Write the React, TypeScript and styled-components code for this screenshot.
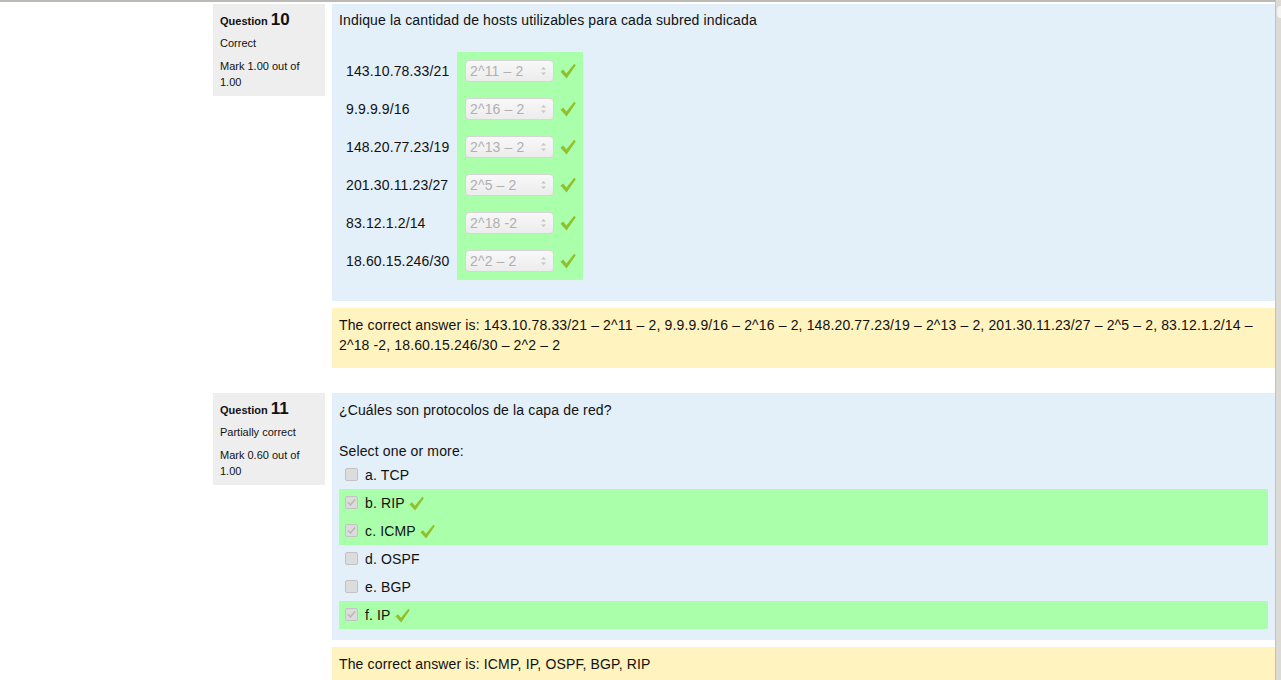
import styled, { createGlobalStyle } from "styled-components";

const GlobalStyle = createGlobalStyle`
  body {
    margin: 0;
    background: #fff;
    font-family: "Liberation Sans", Arial, sans-serif;
    color: #111;
  }
`;

const Frame = styled.div`
  display: flex;
  height: 680px;
  overflow: hidden;
`;

const Page = styled.div`
  flex: 1;
  border-top: 2px solid #bcbab5;
  padding: 2px 0 0 213px;
`;

const Scrollbar = styled.div`
  width: 5px;
  background: #dcdad5;
  border-left: 1px solid #c4c2bd;
  position: relative;
  &::before {
    content: "";
    position: absolute;
    top: 6px;
    left: 1px;
    right: 0;
    height: 12px;
    background: #f4f4f2;
    border-radius: 4px 0 0 4px;
  }
`;

const QuestionRow = styled.div<{ $last?: boolean }>`
  display: flex;
  align-items: flex-start;
  gap: 7px;
  margin-bottom: ${(p) => (p.$last ? "0" : "25px")};
`;

const Info = styled.div`
  width: 112px;
  flex-shrink: 0;
  box-sizing: border-box;
  height: 92px;
  background: #eeeeee;
  padding: 7px 7px 0 7px;
  font-size: 11px;
`;

const QNo = styled.div`
  line-height: 18px;
  font-weight: bold;
  span {
    font-size: 17px;
  }
`;

const State = styled.div`
  margin-top: 5px;
  line-height: 16px;
`;

const Grade = styled.div`
  margin-top: 7px;
  line-height: 16px;
`;

const Content = styled.div`
  flex: 1;
  display: flex;
  flex-direction: column;
  gap: 7px;
  letter-spacing: 0.14px;
`;

const Formulation = styled.div<{ $top: number; $bottom: number }>`
  background: #e3eff9;
  padding: ${(p) => p.$top}px 7px ${(p) => p.$bottom}px 7px;
  font-size: 14px;
  line-height: 20px;
`;

const Outcome = styled.div`
  background: #fff3bf;
  padding: 7px 7px 13px 7px;
  font-size: 14px;
  line-height: 20px;
`;

const QText = styled.div<{ $gap: number }>`
  margin-bottom: ${(p) => p.$gap}px;
`;

const AnswerTable = styled.div`
  display: grid;
  grid-template-columns: 118px 126px;
`;

const Label = styled.div`
  height: 38px;
  display: flex;
  align-items: center;
  padding-left: 7px;
`;

const AnswerCell = styled.div`
  height: 38px;
  background: #aaffaa;
  display: flex;
  align-items: center;
  padding-left: 8px;
  gap: 5px;
`;

const Select = styled.div`
  width: 89px;
  height: 22px;
  box-sizing: border-box;
  border: 1px solid #d6d6d6;
  border-radius: 4px;
  background: linear-gradient(#f8f8f8, #ececec);
  color: #b0b0b0;
  display: flex;
  align-items: center;
  justify-content: space-between;
  padding: 0 6px 0 4px;
  font-size: 14px;
`;

const Spinner = styled.svg`
  width: 7px;
  height: 12px;
`;

const Tick = styled.svg<{ $size: number }>`
  width: ${(p) => p.$size}px;
  height: ${(p) => p.$size}px;
  flex-shrink: 0;
`;

const Prompt = styled.div`
  line-height: 20px;
`;

const Option = styled.div<{ $correct?: boolean }>`
  height: 28px;
  display: flex;
  align-items: center;
  padding-left: 6px;
  background: ${(p) => (p.$correct ? "#aaffaa" : "transparent")};
`;

const Box = styled.span`
  width: 11px;
  height: 11px;
  border: 1px solid #c2c2c2;
  border-radius: 2px;
  background: #dcdcdc;
  margin-right: 7px;
  position: relative;
  top: -1px;
  display: flex;
  align-items: center;
  justify-content: center;
`;

const OptionText = styled.span`
  display: flex;
  align-items: center;
  gap: 3px;
`;

function CheckMark({ size = 18 }: { size?: number }) {
  return (
    <Tick $size={size} viewBox="0 0 18 18">
      <path
        d="M1.5 9.8 L4.2 7.6 L7.4 11.4 L15.2 1.8 L16.8 3.2 L7.6 16.4 Z"
        fill="#91c02c"
      />
    </Tick>
  );
}

function Arrows() {
  return (
    <Spinner viewBox="0 0 7 12">
      <path d="M1 4.5 L3.5 2 L6 4.5 Z" fill="#c4c4c4" />
      <path d="M1 7.5 L3.5 10 L6 7.5 Z" fill="#c4c4c4" />
    </Spinner>
  );
}

const subnets = [
  ["143.10.78.33/21", "2^11 – 2"],
  ["9.9.9.9/16", "2^16 – 2"],
  ["148.20.77.23/19", "2^13 – 2"],
  ["201.30.11.23/27", "2^5 – 2"],
  ["83.12.1.2/14", "2^18 -2"],
  ["18.60.15.246/30", "2^2 – 2"],
];

const protocols = [
  { text: "a. TCP", checked: false },
  { text: "b. RIP", checked: true },
  { text: "c. ICMP", checked: true },
  { text: "d. OSPF", checked: false },
  { text: "e. BGP", checked: false },
  { text: "f. IP", checked: true },
];

export default function App() {
  return (
    <Frame>
      <GlobalStyle />
      <Page>
        <QuestionRow>
          <Info>
            <QNo>
              Question <span>10</span>
            </QNo>
            <State>Correct</State>
            <Grade>Mark 1.00 out of 1.00</Grade>
          </Info>
          <Content>
            <Formulation $top={6} $bottom={21}>
              <QText $gap={22}>
                Indique la cantidad de hosts utilizables para cada subred indicada
              </QText>
              <AnswerTable>
                {subnets.map(([net, ans]) => (
                  <>
                    <Label key={net}>{net}</Label>
                    <AnswerCell key={net + "a"}>
                      <Select>
                        {ans}
                        <Arrows />
                      </Select>
                      <CheckMark />
                    </AnswerCell>
                  </>
                ))}
              </AnswerTable>
            </Formulation>
            <Outcome>
              The correct answer is: 143.10.78.33/21 – 2^11 – 2, 9.9.9.9/16 – 2^16 – 2,
              148.20.77.23/19 – 2^13 – 2, 201.30.11.23/27 – 2^5 – 2, 83.12.1.2/14 – 2^18 -2,
              18.60.15.246/30 – 2^2 – 2
            </Outcome>
          </Content>
        </QuestionRow>
        <QuestionRow $last>
          <Info>
            <QNo>
              Question <span>11</span>
            </QNo>
            <State>Partially correct</State>
            <Grade>Mark 0.60 out of 1.00</Grade>
          </Info>
          <Content>
            <Formulation $top={7} $bottom={11}>
              <QText $gap={21}>¿Cuáles son protocolos de la capa de red?</QText>
              <Prompt>Select one or more:</Prompt>
              {protocols.map((p) => (
                <Option key={p.text} $correct={p.checked}>
                  <Box>
                    {p.checked && (
                      <svg width="9" height="9" viewBox="0 0 9 9">
                        <path d="M1 4.5 L3.5 7 L8 1.5" fill="none" stroke="#b5b5b5" strokeWidth="1.4" />
                      </svg>
                    )}
                  </Box>
                  <OptionText>
                    {p.text}
                    {p.checked && <CheckMark size={17} />}
                  </OptionText>
                </Option>
              ))}
            </Formulation>
            <Outcome>The correct answer is: ICMP, IP, OSPF, BGP, RIP</Outcome>
          </Content>
        </QuestionRow>
      </Page>
      <Scrollbar />
    </Frame>
  );
}
